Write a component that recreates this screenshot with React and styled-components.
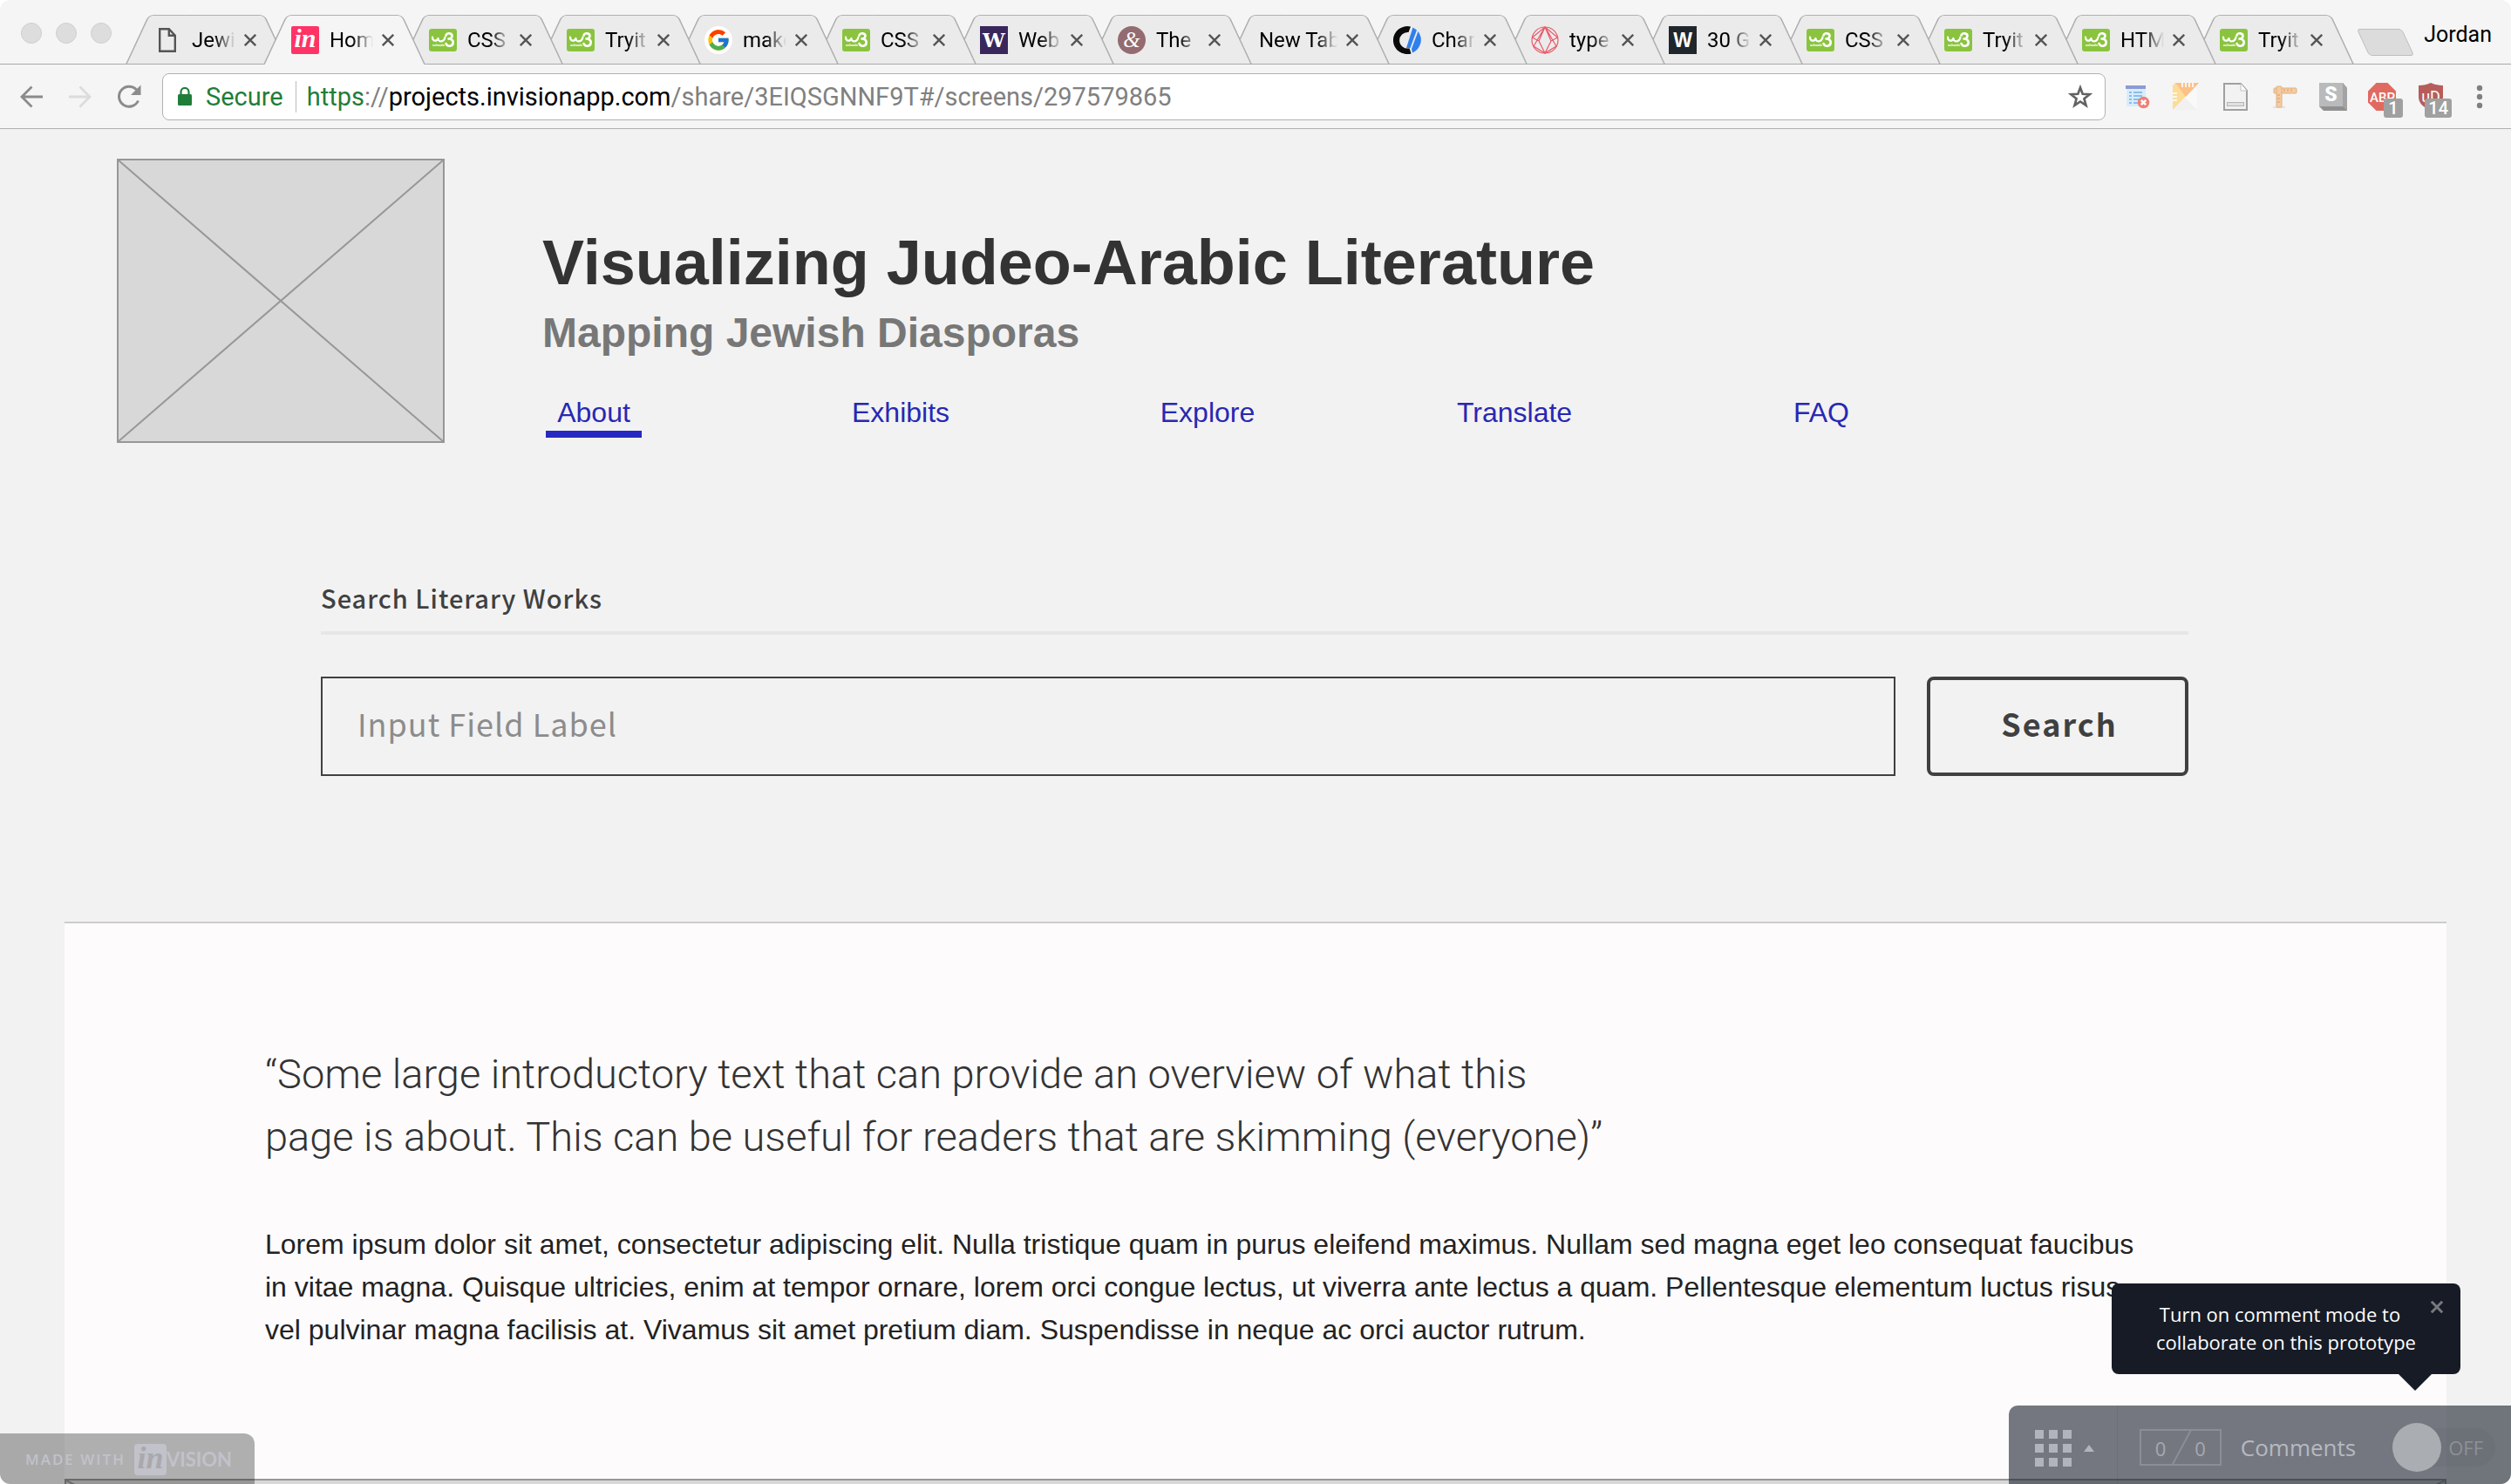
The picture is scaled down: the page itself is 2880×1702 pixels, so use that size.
import React from "react";
import styled, { createGlobalStyle } from "styled-components";
import { FcGoogle } from "react-icons/fc";

const helvetica = `"Liberation Sans", Arial, sans-serif`;
const chromeFont = `Roboto, "Liberation Sans", sans-serif`;
const sourceSans = `"Noto Sans CJK SC", "Noto Sans", sans-serif`;
const openSans = `"Open Sans", "Noto Sans", sans-serif`;

const line = "#b1b1b1";
const ink = "#404040";
const paper = "#f2f2f2";

const GlobalStyle = createGlobalStyle`
  *, *::before, *::after { box-sizing: border-box; }
  body { margin: 0; background: #fff; font-family: ${helvetica}; }
  h1, h2, p, ul { margin: 0; padding: 0; }
  ul { list-style: none; }
  svg { display: block; }
`;

const PlainButton = styled.button`
  padding: 0;
  border: 0;
  background: none;
  color: inherit;
  font: inherit;
  cursor: pointer;
`;

const Window = styled.div`
  position: relative;
  display: flex;
  flex-direction: column;
  height: 100vh;
  overflow: hidden;
  border-radius: 12px;
  background: ${paper};
`;

/* ---------- tab strip ---------- */

const TabStrip = styled.header`
  display: flex;
  height: 74px;
  padding: 17px 22px 0 24px;
  background: #f5f5f5;
  box-shadow: inset 0 -1px 0 #a9a9a9;
  font: 24px/28px ${chromeFont};
  color: #000;
`;

const WindowControls = styled.div`
  display: flex;
  gap: 16px;
  padding-top: 9px;
  margin-right: 16px;
`;

const WindowControl = styled(PlainButton)`
  width: 24px;
  height: 24px;
  border: 1px solid #cfcfcf;
  border-radius: 50%;
  background: #ddd;
`;

const Tabs = styled.ul`
  display: flex;
`;

const tabFill = (p) => (p.$active ? "#f5f5f5" : "#ebebeb");

const Tab = styled.li`
  position: relative;
  z-index: ${(p) => (p.$active ? 40 : p.$order)};
  display: flex;
  align-items: center;
  width: 186px;
  height: 57px;
  margin-right: -28px;
  padding-left: 32px;
  background: linear-gradient(${tabFill}, ${tabFill}) 40px 1px / 106px calc(100% - 2px) no-repeat;

  &::before,
  &::after {
    content: "";
    position: absolute;
    z-index: -1;
    top: 0;
    bottom: ${(p) => (p.$active ? "0" : "1px")};
    border: 0 solid ${line};
    border-top-width: 1px;
    background: ${tabFill};
  }
  &::before {
    left: 13px;
    right: 80px;
    border-left-width: 2px;
    border-top-left-radius: 6px;
    transform: skewX(-25deg);
  }
  &::after {
    left: 80px;
    right: 13px;
    border-right-width: 2px;
    border-top-right-radius: 6px;
    transform: skewX(25deg);
  }
`;

const Favicon = styled.span`
  display: grid;
  place-items: center;
  width: 32px;
  margin-right: 12px;
`;

const TabTitle = styled.span`
  width: ${(p) => (p.$wide ? "90px" : "50px")};
  margin-left: ${(p) => (p.$wide ? "4px" : "0")};
  overflow: hidden;
  white-space: nowrap;
  mask-image: linear-gradient(to right, #000 calc(100% - 24px), transparent);
`;

const TabClose = styled(PlainButton)`
  margin-left: 10px;
`;

const NewTab = styled(PlainButton)`
  width: 52px;
  height: 31px;
  margin: 16px 0 0 38px;
  border: 1px solid #bdbdbd;
  border-radius: 4px;
  background: #dcdcdc;
  transform: skewX(25deg);
`;

const Profile = styled(PlainButton)`
  align-self: flex-start;
  margin-left: auto;
  padding-top: 9px;
  font-size: 25px;
`;

/* ---------- toolbar ---------- */

const Toolbar = styled.div`
  display: flex;
  align-items: center;
  height: 74px;
  padding: 0 28px 0 22px;
  border-bottom: 1px solid ${line};
  background: #f5f5f5;
`;

const NavButtons = styled.div`
  display: flex;
  align-items: center;
  gap: 28px;
  margin-right: 24px;
`;

const AddressBar = styled.div`
  display: flex;
  flex: 1;
  align-items: center;
  height: 54px;
  padding: 0 14px 0 17px;
  border: 1px solid ${line};
  border-radius: 8px;
  background: #fff;
  font: 29px/36px ${chromeFont};
`;

const Security = styled(PlainButton)`
  display: flex;
  align-items: center;
  gap: 16px;
  padding-right: 14px;
  border-right: 1px solid #bbb;
  color: #1f7d3a;
`;

const Url = styled.div`
  flex: 1;
  padding-left: 12px;
  color: #808080;
`;

const Scheme = styled.span`
  color: #1f7d3a;
`;

const Host = styled.span`
  color: #000;
`;

const Extensions = styled.div`
  display: flex;
  gap: 24px;
  margin: 0 32px 0 21px;
`;

const Extension = styled(PlainButton)`
  position: relative;
  width: 32px;
  height: 32px;
`;

const Badge = styled.span`
  position: absolute;
  top: 18px;
  right: -8px;
  min-width: 22px;
  padding: 0 4px;
  border-radius: 3px;
  background: #a0a0a0;
  color: #fff;
  font: 500 20px/22px ${chromeFont};
`;

/* ---------- page ---------- */

const Page = styled.main`
  flex: 1;
  min-height: 0;
  overflow: hidden;
  background: ${paper};
`;

const Masthead = styled.header`
  display: flex;
  gap: 112px;
  padding: 34px 134px 0;
`;

const Crossed = styled.svg`
  width: ${(p) => p.$width};
  height: ${(p) => p.$height};
  flex: none;
  border: 2px solid #979797;
  background: #d8d8d8;
  stroke: #979797;
  stroke-width: 2;
`;

const Heading = styled.div`
  flex: 1;
  padding-top: 79px;
`;

const Title = styled.h1`
  color: #333;
  font-size: 72px;
  line-height: 80px;
`;

const Subtitle = styled.h2`
  margin-top: 12px;
  color: #777;
  font-size: 48px;
  line-height: 58px;
`;

const SiteNav = styled.nav`
  display: grid;
  grid-template-columns: repeat(5, 110px);
  column-gap: 242px;
  margin: 44px 0 0 4px;
`;

const NavLink = styled.a`
  display: flex;
  justify-content: center;
  padding-bottom: 3px;
  border-bottom: 8px solid ${(p) => (p.$active ? "#2529c2" : "transparent")};
  color: #2828b4;
  font-size: 32px;
  line-height: 36px;
  text-decoration: none;
  white-space: nowrap;
`;

const SearchForm = styled.form`
  margin: 156px 370px 0 368px;
  font-family: ${sourceSans};
  color: ${ink};
`;

const SearchLabel = styled.label`
  display: block;
  padding-bottom: 18px;
  border-bottom: 4px solid #e6e6e6;
  font-size: 29px;
  font-weight: 500;
  line-height: 42px;
  letter-spacing: 1px;
`;

const SearchRow = styled.div`
  display: flex;
  gap: 36px;
  height: 114px;
  margin-top: 48px;
`;

const SearchInput = styled.input`
  flex: 1;
  min-width: 0;
  padding: 0 40px 9px;
  border: 2px solid ${ink};
  border-radius: 0;
  background: transparent;
  color: ${ink};
  font: 36px ${sourceSans};
  letter-spacing: 1px;
  &::placeholder {
    color: #8c8c8c;
    opacity: 1;
  }
`;

const SearchButton = styled(PlainButton)`
  width: 300px;
  padding: 0 0 9px 4px;
  border: 4px solid ${ink};
  border-radius: 8px;
  font: 700 36px ${sourceSans};
  letter-spacing: 2px;
`;

const Panel = styled.section`
  margin: 167px 74px 0;
  border-top: 2px solid #ccc;
  background: #fdfbfc;
`;

const Copy = styled.div`
  padding: 137px 230px 0;
`;

const Quote = styled.p`
  color: #333;
  font: 300 47px/72px Roboto, ${helvetica};
`;

const Body = styled.p`
  max-width: 2170px;
  margin: 63px 0 146px;
  color: #222;
  font-size: 32px;
  line-height: 49px;
`;

/* ---------- overlays ---------- */

const MadeWith = styled.a`
  position: absolute;
  left: 0;
  bottom: 0;
  display: flex;
  align-items: center;
  height: 58px;
  padding: 2px 26px 0 29px;
  border-top-right-radius: 12px;
  background: rgba(0, 0, 0, 0.3);
  color: #c1c2ca;
  font: 600 17px/24px ${openSans};
  letter-spacing: 2px;
  text-decoration: none;
`;

const LogoMark = styled.span`
  width: 37px;
  height: 36px;
  margin-left: 10px;
  border-radius: 4px;
  background: #c1c2ca;
  color: #a9a9ad;
  font: italic 700 36px/32px "Liberation Serif", serif;
  letter-spacing: 0;
  text-align: center;
`;

const LogoWord = styled.span`
  font: 700 22px/24px Lato, sans-serif;
  letter-spacing: 0;
`;

const CommentBar = styled.aside`
  position: absolute;
  right: 0;
  bottom: 0;
  display: flex;
  height: 90px;
  border-top-left-radius: 10px;
  background: rgba(25, 31, 44, 0.6);
  color: #b6b9c0;
  font-family: ${openSans};
`;

const ScreensButton = styled(PlainButton)`
  display: flex;
  align-items: center;
  gap: 14px;
  width: 125px;
  padding: 8px 0 0 30px;
  border-right: 1px solid rgba(0, 0, 0, 0.05);
`;

const CommentControls = styled.div`
  display: flex;
  align-items: center;
  padding: 6px 18px 0 25px;
`;

const Counter = styled.div`
  position: relative;
  display: flex;
  justify-content: space-between;
  width: 94px;
  height: 42px;
  padding: 2px 16px;
  border: 2px solid #8b8e95;
  color: #a6a9b0;
  font-size: 22px;
  line-height: 36px;
`;

const Slash = styled.svg`
  position: absolute;
  top: -1px;
  left: 34px;
`;

const CommentsLabel = styled.label`
  margin: 0 42px 0 22px;
  font-size: 26px;
  line-height: 36px;
`;

const Toggle = styled.div`
  display: flex;
  align-items: center;
`;

const Switch = styled.input`
  position: relative;
  appearance: none;
  width: 56px;
  height: 56px;
  margin: 0;
  border-radius: 50%;
  background: #aaadb1;
`;

const SwitchState = styled.span`
  margin-left: -28px;
  padding: 0 14px 0 36px;
  border-radius: 0 22px 22px 0;
  background: rgba(0, 0, 0, 0.03);
  color: #8e9198;
  font-size: 22px;
  line-height: 44px;
`;

const Tooltip = styled.div`
  position: absolute;
  right: 58px;
  bottom: 126px;
  width: 400px;
  padding: 19px 20px 21px;
  border-radius: 8px;
  background: #161b26;
  color: #fff;
  font: 22px/32px ${openSans};
  text-align: center;
  &::after {
    content: "";
    position: absolute;
    top: 100%;
    right: 33px;
    border: 19px solid transparent;
    border-top-color: #161b26;
    border-bottom: 0;
  }
`;

const TooltipClose = styled(PlainButton)`
  float: right;
  width: 14px;
  height: 14px;
  margin-top: 1px;
`;

/* ---------- drawings ---------- */

const Cross = ({ size = 14, color = "#555", width = 2.4 }) => (
  <svg width={size} height={size} viewBox="0 0 14 14" stroke={color} strokeWidth={width}>
    <path d="M.8.8l12.4 12.4M13.2.8L.8 13.2" />
  </svg>
);

const FileIcon = () => (
  <svg width="20" height="28" viewBox="0 0 20 28" fill="none" stroke="#555" strokeWidth="2.4">
    <path d="M1.2 1.2h10.6l7 7.6v18H1.2zM11.8 1.2v7.6h7" />
  </svg>
);

const InvisionIcon = () => (
  <svg width="32" height="32">
    <rect width="32" height="32" rx="2" fill="#ff3366" />
    <text x="16" y="24" textAnchor="middle" fill="#fff" fontFamily="Liberation Serif" fontStyle="italic" fontWeight="700" fontSize="30">in</text>
  </svg>
);

const W3Icon = () => (
  <svg width="32" height="26" viewBox="0 0 32 26" fill="none" stroke="#fff" strokeLinecap="round" strokeLinejoin="round">
    <rect width="32" height="26" rx="3" fill="#8ac43f" stroke="none" />
    <path strokeWidth="2.2" d="M4 9.5c0 5 5 5.500 6.500 1.500 0 5 7 4.500 8-1.500" />
    <path strokeWidth="2.6" d="M19.5 7.500c1.500-3.500 7-2.500 7 .8 0 2.200-2 3.200-4 3.200 3 0 5.500 1.500 5.200 4.500-.5 4.500-6.500 5-8.200 1" />
    <text x="4" y="19.500" fill="#fff" stroke="none" fontFamily="Roboto" fontWeight="700" fontSize="4">schools</text>
  </svg>
);

const GoogleIcon = () => (
  <svg width="32" height="32">
    <circle cx="16" cy="16" r="16" fill="#fff" />
    <FcGoogle x="2" y="2" size="28" />
  </svg>
);

const LetterIcon = ({ color, font }) => (
  <svg width="32" height="32">
    <rect width="32" height="32" fill={color} />
    <text x="16" y="24" textAnchor="middle" fill="#fff" fontFamily={font} fontWeight="700" fontSize="23">W</text>
  </svg>
);

const AmpersandIcon = () => (
  <svg width="32" height="32">
    <circle cx="16" cy="16" r="16" fill="#936b70" />
    <text x="16" y="24" textAnchor="middle" fill="#fff" fontFamily="Liberation Serif" fontStyle="italic" fontSize="25">&amp;</text>
  </svg>
);

const ChartIcon = () => (
  <svg width="32" height="32" viewBox="0 0 32 32">
    <path d="M20 .6L17.500 7A9.300 9.300 0 1 0 18.500 25.300L20.500 31.400A16 16 0 1 1 20 .6z" fill="#0a0a0a" />
    <path d="M22.500 1.500L27 4.500 19.500 25 15 25z" fill="#2f80ed" />
    <path d="M28.500 6A16 16 0 0 1 22 30.500L21 26z" fill="#2f80ed" />
  </svg>
);

const GeometryIcon = () => (
  <svg width="32" height="32" viewBox="0 0 32 32" fill="none" stroke="#e8596a" strokeWidth="1.2">
    <circle cx="16" cy="16" r="15" />
    <path d="M16 1L3 23l13 8 13-8zM16 1L9 17l7 14 7-14zM1.500 13L16 1l14.500 12M1.500 13L9 17M30.500 13L23 17" />
  </svg>
);

const favicons = {
  file: <FileIcon />,
  invision: <InvisionIcon />,
  w3: <W3Icon />,
  google: <GoogleIcon />,
  uw: <LetterIcon color="#39275b" font="DejaVu Serif" />,
  amp: <AmpersandIcon />,
  chart: <ChartIcon />,
  geometry: <GeometryIcon />,
  w: <LetterIcon color="#1f272c" font="Liberation Sans" />,
};

const tabs = [
  ["file", "Jewi"],
  ["invision", "Hom"],
  ["w3", "CSS"],
  ["w3", "Tryit"],
  ["google", "make"],
  ["w3", "CSS"],
  ["uw", "Web"],
  ["amp", "The"],
  [null, "New Tab"],
  ["chart", "Char"],
  ["geometry", "type"],
  ["w", "30 G"],
  ["w3", "CSS"],
  ["w3", "Tryit"],
  ["w3", "HTM"],
  ["w3", "Tryit"],
];

const ArrowIcon = ({ color, flip }) => (
  <svg width="28" height="26" viewBox="0 0 28 26" fill="none" stroke={color} strokeWidth="2.8">
    <path d={flip ? "M1 13h24M13.500 1.500L25 13 13.500 24.500" : "M27 13H3M14.500 1.500L3 13l11.500 11.500"} />
  </svg>
);

const ReloadIcon = () => (
  <svg width="28" height="28" viewBox="0 0 28 28">
    <path d="M24.500 18.500A11.500 11.500 0 1 1 22.500 6" fill="none" stroke="#8b8b8b" strokeWidth="3" />
    <path d="M27.500 .5v11.500H16z" fill="#8b8b8b" />
  </svg>
);

const LockIcon = () => (
  <svg width="16" height="21" viewBox="0 0 16 21">
    <rect y="8" width="16" height="13" rx="1.500" fill="#1f7d3a" />
    <path d="M3.500 9V5.500a4.500 4.500 0 0 1 9 0V9" fill="none" stroke="#1f7d3a" strokeWidth="2.2" />
  </svg>
);

const StarIcon = () => (
  <svg width="28" height="28" viewBox="0 0 28 28" fill="none" stroke="#616161" strokeWidth="2.6">
    <path d="M14 3.500l2.700 7.300 8 .4-6.300 5 2.200 7.700L14 19.500l-6.600 4.400 2.200-7.700-6.300-5 8-.4z" />
  </svg>
);

const extensions = [
  {
    name: "Clear list",
    art: (
      <>
        <rect x="3" y="3" width="22" height="24" fill="#d9ecfb" />
        <rect x="2" y="3" width="23" height="4" fill="#8b9bd6" />
        <path d="M6 11h3M11 11h10M6 15h3M11 15h10M6 19h3M11 19h8M6 23h3M11 23h6" stroke="#6cb0e6" strokeWidth="1.6" />
        <circle cx="22.500" cy="22.500" r="6.800" fill="#ee8077" />
        <path d="M19.800 19.800l5.400 5.400M25.200 19.800l-5.400 5.400" stroke="#fff" strokeWidth="2.4" />
      </>
    ),
  },
  {
    name: "Page ruler",
    art: (
      <>
        <path d="M0 31h28V4z" fill="#f1f1f1" />
        <path d="M14 17L28 4v27z" fill="#f9f9f9" />
        <path d="M3 0h27L0 31V3z" fill="#fcdc98" />
        <path d="M3 0h27L15 16z" fill="#fbc188" />
        <path d="M11 0v5M15 0v5M19 0v5M23 0v5M0 12h5M0 16h5M0 20h5" stroke="#fff" strokeWidth="1.6" />
      </>
    ),
  },
  {
    name: "Document",
    art: (
      <>
        <path d="M3 1h19l7 8v22H3z" fill="#f2f2f2" stroke="#a0a0a0" strokeWidth="2" />
        <path d="M22 1v8h7" fill="#fff" stroke="#c0c0c0" />
        <rect x="6.500" y="22.500" width="19" height="4" fill="#e0e0e0" stroke="#b5b5b5" />
      </>
    ),
  },
  {
    name: "Dimensions",
    art: (
      <>
        <path d="M3 28h14" stroke="#e2e2e2" strokeWidth="2" />
        <rect x="4" y="6" width="26" height="6" rx="1" fill="#f3cda3" stroke="#e3ae7d" />
        <rect x="7" y="4" width="6" height="24" rx="1" fill="#f3cda3" stroke="#e3ae7d" />
        <path d="M16 7v3M20 7v3M24 7v3M8 14h3M8 18h3M8 22h3" stroke="#d99c66" />
      </>
    ),
  },
  {
    name: "Stylish",
    art: (
      <>
        <path d="M0 0h27l5 6v26H5l-5-5z" fill="#909090" />
        <path d="M27 0l5 6v26l-5-5z" fill="#a3a3a3" />
        <rect width="27" height="27" fill="#b9babb" />
        <text x="13.500" y="21" textAnchor="middle" fill="#fff" fontFamily="Roboto" fontWeight="900" fontSize="23">S</text>
      </>
    ),
  },
  {
    name: "AdBlock Plus",
    badge: "1",
    art: (
      <>
        <path d="M9.500 0h13L32 9.500v13L22.500 32h-13L0 22.500v-13z" fill="#e06a60" />
        <text x="16.500" y="21.500" textAnchor="middle" fill="#fff" fontFamily="Roboto" fontWeight="500" fontSize="15">ABP</text>
      </>
    ),
  },
  {
    name: "uBlock",
    badge: "14",
    art: (
      <>
        <path d="M2 3c5 0 10-1 14-3 4 2 9 3 14 3v13c0 8-6 12-14 16C8 28 2 24 2 16z" fill="#b65d5b" />
        <text x="16" y="22" textAnchor="middle" fill="#fff" fontFamily="Roboto" fontSize="18">uD</text>
      </>
    ),
  },
];

const links = ["About", "Exhibits", "Explore", "Translate", "FAQ"];

const CrossedBox = ({ width, height }) => (
  <Crossed $width={width} $height={height} viewBox="0 0 100 100" preserveAspectRatio="none" aria-hidden="true">
    <path d="M0 0L100 100M100 0L0 100" vectorEffect="non-scaling-stroke" />
  </Crossed>
);

const BrowserChrome = () => (
  <>
    <TabStrip>
      <WindowControls>
        <WindowControl aria-label="Close window" />
        <WindowControl aria-label="Minimise window" />
        <WindowControl aria-label="Zoom window" />
      </WindowControls>
      <Tabs>
        {tabs.map(([icon, title], i) => (
          <Tab key={i} $active={i === 1} $order={tabs.length - i}>
            {icon && <Favicon>{favicons[icon]}</Favicon>}
            <TabTitle $wide={!icon}>{title}</TabTitle>
            <TabClose aria-label="Close tab">
              <Cross />
            </TabClose>
          </Tab>
        ))}
      </Tabs>
      <NewTab aria-label="New tab" />
      <Profile>Jordan</Profile>
    </TabStrip>
    <Toolbar>
      <NavButtons>
        <PlainButton aria-label="Back"><ArrowIcon color="#8b8b8b" /></PlainButton>
        <PlainButton aria-label="Forward"><ArrowIcon color="#dcdcdc" flip /></PlainButton>
        <PlainButton aria-label="Reload"><ReloadIcon /></PlainButton>
      </NavButtons>
      <AddressBar>
        <Security>
          <LockIcon />
          Secure
        </Security>
        <Url>
          <Scheme>https</Scheme>://<Host>projects.invisionapp.com</Host>/share/3EIQSGNNF9T#/screens/297579865
        </Url>
        <PlainButton aria-label="Bookmark this page"><StarIcon /></PlainButton>
      </AddressBar>
      <Extensions>
        {extensions.map((e) => (
          <Extension key={e.name} aria-label={e.name}>
            <svg width="32" height="32" viewBox="0 0 32 32">{e.art}</svg>
            {e.badge && <Badge>{e.badge}</Badge>}
          </Extension>
        ))}
      </Extensions>
      <PlainButton aria-label="Menu">
        <svg width="16" height="28" fill="#808080">
          <circle cx="8" cy="4" r="3.200" />
          <circle cx="8" cy="14" r="3.200" />
          <circle cx="8" cy="24" r="3.200" />
        </svg>
      </PlainButton>
    </Toolbar>
  </>
);

export default function App() {
  return (
    <Window>
      <GlobalStyle />
      <BrowserChrome />
      <Page>
        <Masthead>
          <CrossedBox width="376px" height="326px" />
          <Heading>
            <Title>Visualizing Judeo-Arabic Literature</Title>
            <Subtitle>Mapping Jewish Diasporas</Subtitle>
            <SiteNav>
              {links.map((name, i) => (
                <NavLink key={name} href={`#${name.toLowerCase()}`} $active={i === 0}>
                  {name}
                </NavLink>
              ))}
            </SiteNav>
          </Heading>
        </Masthead>

        <SearchForm onSubmit={(e) => e.preventDefault()}>
          <SearchLabel htmlFor="works">Search Literary Works</SearchLabel>
          <SearchRow>
            <SearchInput id="works" type="text" placeholder="Input Field Label" />
            <SearchButton type="submit">Search</SearchButton>
          </SearchRow>
        </SearchForm>

        <Panel>
          <Copy>
            <Quote>
              “Some large introductory text that can provide an overview of what this<br />
              page is about. This can be useful for readers that are skimming (everyone)”
            </Quote>
            <Body>
              Lorem ipsum dolor sit amet, consectetur adipiscing elit. Nulla tristique quam in purus eleifend maximus.
              Nullam sed magna eget leo consequat faucibus in vitae magna. Quisque ultricies, enim at tempor ornare,
              lorem orci congue lectus, ut viverra ante lectus a quam. Pellentesque elementum luctus risus, vel
              pulvinar magna facilisis at. Vivamus sit amet pretium diam. Suspendisse in neque ac orci auctor rutrum.
            </Body>
          </Copy>
          <CrossedBox width="100%" height="1400px" />
        </Panel>
      </Page>

      <MadeWith href="#invision">
        MADE WITH
        <LogoMark>in</LogoMark>
        <LogoWord>VISION</LogoWord>
      </MadeWith>

      <CommentBar>
        <ScreensButton aria-label="Screens">
          <svg width="42" height="42" fill="#b1b4ba">
            {[0, 16, 32].map((y) => [0, 16, 32].map((x) => <rect key={`${x}-${y}`} x={x} y={y} width="10" height="10" />))}
          </svg>
          <svg width="12" height="8" fill="#b1b4ba"><path d="M6 0l6 8H0z" /></svg>
        </ScreensButton>
        <CommentControls>
          <Counter>
            <span>0</span>
            <Slash width="24" height="41" stroke="#8b8e95" strokeWidth="2"><path d="M1 41L23 0" /></Slash>
            <span>0</span>
          </Counter>
          <CommentsLabel htmlFor="comments">Comments</CommentsLabel>
          <Toggle>
            <Switch id="comments" type="checkbox" />
            <SwitchState>OFF</SwitchState>
          </Toggle>
        </CommentControls>
      </CommentBar>

      <Tooltip role="tooltip">
        <TooltipClose aria-label="Dismiss">
          <Cross color="#77797e" width={3} />
        </TooltipClose>
        Turn on comment mode to<br />
        collaborate on this prototype
      </Tooltip>
    </Window>
  );
}
